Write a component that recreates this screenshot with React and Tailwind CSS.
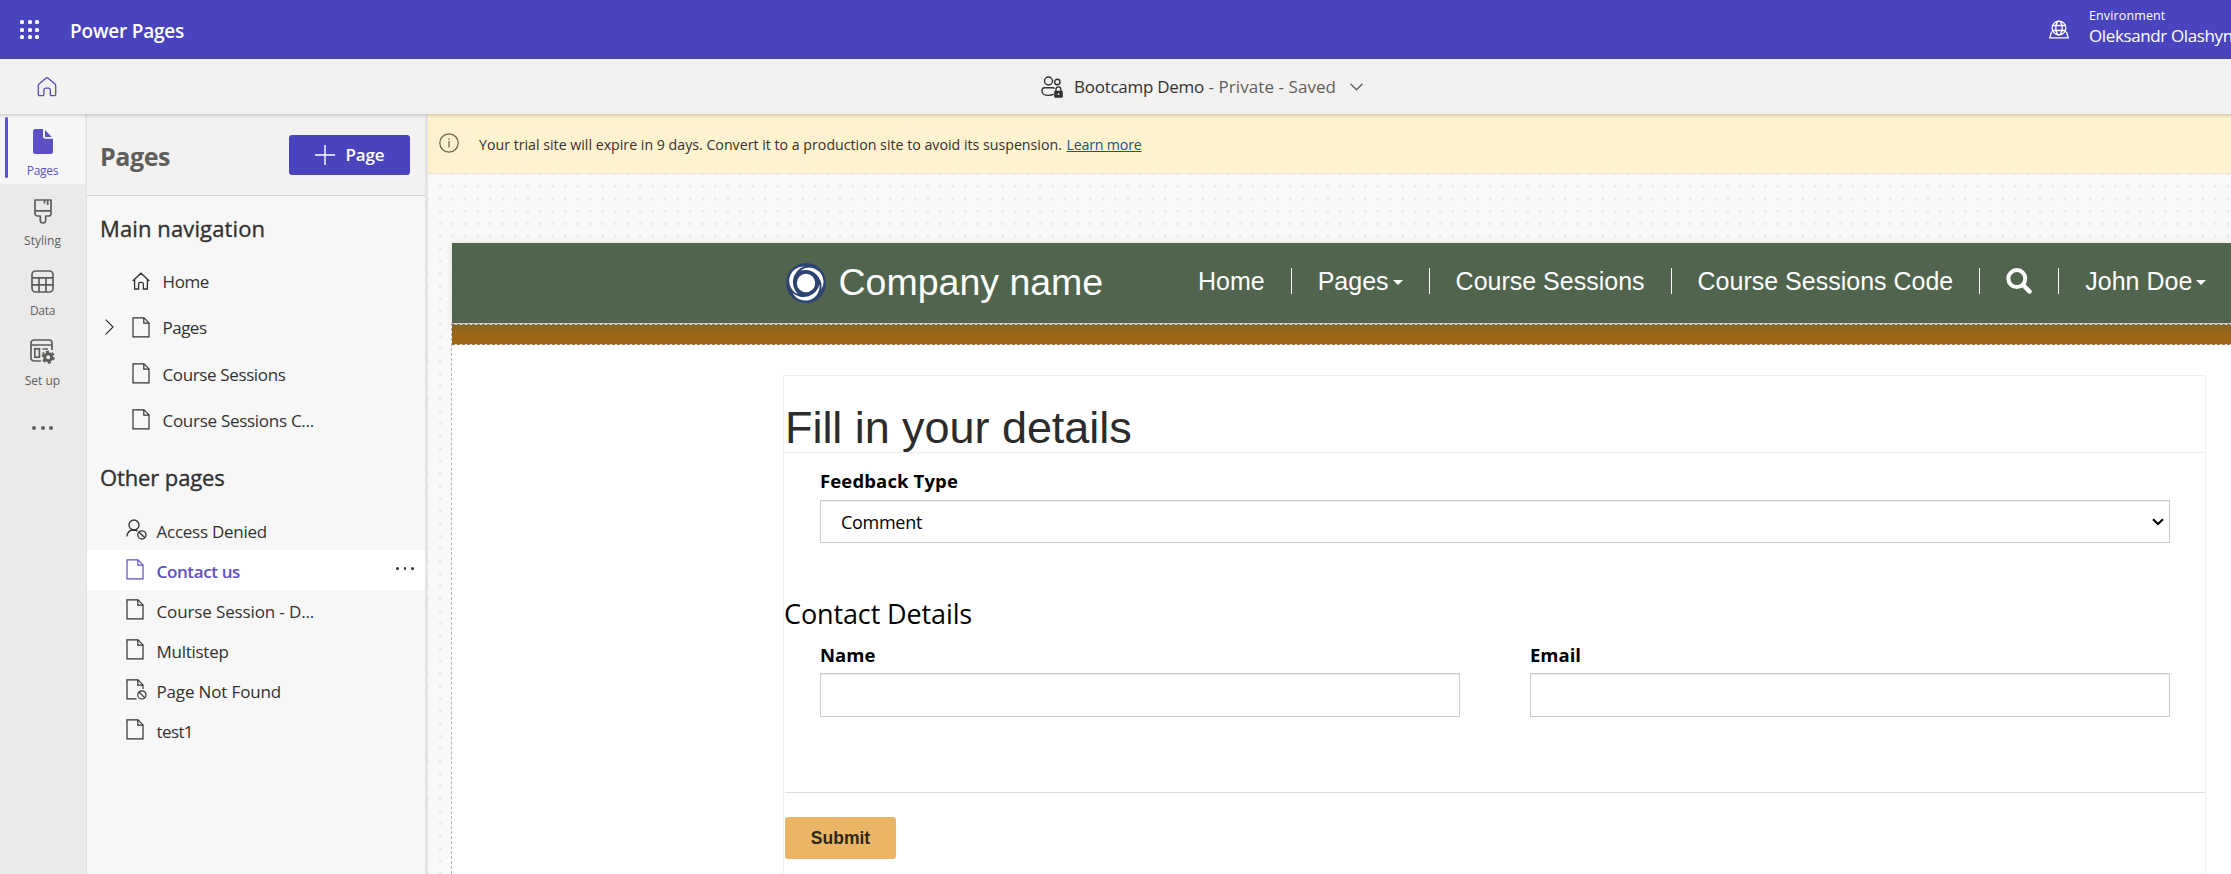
import React from "react";

const DocIcon = ({ className = "" }) => (
  <svg viewBox="0 0 18 21" className={"h-[21px] w-[18px] shrink-0 " + className} fill="none" stroke="currentColor" strokeWidth="1.2">
    <path d="M1 .9H12L17 5.900V19.9H1Z" />
    <path d="M11.800 .9V6.100H17" />
  </svg>
);

const HomeIcon = ({ className = "" }) => (
  <svg viewBox="0 0 18 18" className={"h-[18px] w-[18px] shrink-0 " + className} fill="none" stroke="currentColor" strokeWidth="1.3">
    <path d="M.7 9 9 1.2 17.3 9M2.6 7.4V17H6.6V12a1.6 1.6 0 0 1 1.6-1.6h1.6A1.6 1.6 0 0 1 11.4 12v5h4V7.4" />
  </svg>
);

const HomeRoundIcon = () => (
  <svg viewBox="0 0 20 20" className="h-5 w-5" fill="none" stroke="currentColor" strokeWidth="1.3" strokeLinejoin="round">
    <path d="M1.3 8.6a2 2 0 0 1 .7-1.5L8.9 1.2a1.6 1.6 0 0 1 2.2 0L18 7.1a2 2 0 0 1 .7 1.5v8.9a1.2 1.2 0 0 1-1.2 1.2h-3a1.2 1.2 0 0 1-1.2-1.2v-4.3a2 2 0 0 0-2-2H8.9a2 2 0 0 0-2 2v4.3a1.2 1.2 0 0 1-1.2 1.2H2.5a1.2 1.2 0 0 1-1.2-1.2Z" />
  </svg>
);

const UserBlockIcon = () => (
  <svg viewBox="0 0 21 21" className="h-[21px] w-[21px] shrink-0" fill="none" stroke="currentColor" strokeWidth="1.3">
    <circle cx="8" cy="6" r="5" />
    <path d="M.8 17.5C1.3 13.5 4.2 11 7.8 11c1.4 0 2.6.4 3.6 1.1" />
    <circle cx="15.9" cy="15.9" r="4.1" />
    <path d="m13 13 5.8 5.8" />
  </svg>
);

const DocBlockIcon = () => (
  <svg viewBox="0 0 21 21" className="h-[21px] w-[21px] shrink-0" fill="none" stroke="currentColor" strokeWidth="1.2">
    <path d="M10.5 19.9H1V.9H12L17 5.900V10M11.800 .9V6.100H17" />
    <circle cx="15.9" cy="15.9" r="4.1" />
    <path d="m13 13 5.8 5.8" />
  </svg>
);

const PagesRailIcon = () => (
  <svg viewBox="0 0 20 25" className="h-[25px] w-5" fill="currentColor">
    <path d="M2.5 0H10v7.5A2.3 2.3 0 0 0 12.300 9.700H20V22.500A2.500 2.500 0 0 1 17.500 25h-15A2.500 2.500 0 0 1 0 22.500v-20A2.500 2.500 0 0 1 2.500 0Z" />
    <path d="M12 1 18.700 8H12Z" />
  </svg>
);

const StylingIcon = () => (
  <svg viewBox="0 0 18 25" className="h-[25px] w-[18px]" fill="none" stroke="currentColor" strokeWidth="1.700" strokeLinejoin="round">
    <path d="M1 1H17V14.500A2.500 2.500 0 0 1 14.500 17H11.700V21.300A2.700 2.700 0 0 1 6.300 21.300V17H3.500A2.500 2.500 0 0 1 1 14.500ZM1 11.800H17M10.500 1V4.500M13.700 1V6" />
  </svg>
);

const DataIcon = () => (
  <svg viewBox="0 0 23 23" className="h-[23px] w-[23px]" fill="none" stroke="currentColor" strokeWidth="1.700">
    <rect x="1" y="1" width="21" height="21" rx="3.500" />
    <path d="M1 7.800H22M1 14.800H22M8 7.800V22M15 7.800V22" />
  </svg>
);

const SetupIcon = () => (
  <svg viewBox="0 0 25 25" className="h-[25px] w-[25px]" fill="none" stroke="currentColor" strokeWidth="1.700">
    <path d="M11 22H4a3 3 0 0 1-3-3V4A3 3 0 0 1 4 1H19a3 3 0 0 1 3 3v7M1 6H22M12.500 10H18M12.500 14H14.500" />
    <rect x="4.800" y="9.800" width="4.600" height="8.400" />
    <circle cx="18.200" cy="18.200" r="3.500" strokeWidth="3" />
    <circle cx="18.200" cy="18.200" r="5.500" strokeWidth="2.200" strokeDasharray="2.900 2.860" />
  </svg>
);

const PeopleLockIcon = () => (
  <svg viewBox="0 0 23 22" className="h-[22px] w-[23px]" fill="none" stroke="currentColor" strokeWidth="1.400">
    <circle cx="7.500" cy="5" r="4" />
    <circle cx="16.300" cy="6" r="2.700" />
    <path d="M12.800 18.200C11.500 19 9.700 19.400 7.500 19.400 3.500 19.400 1 17.800 1 15.200V14a2.200 2.200 0 0 1 2.200-2.200h8.600a2 2 0 0 1 1.700.9" />
    <path d="M15 15V13.300a2.400 2.400 0 0 1 4.800 0V15" />
    <rect x="13.200" y="14.800" width="8.600" height="7" rx="1" fill="currentColor" stroke="none" />
    <circle cx="17.500" cy="18.200" r=".9" fill="#f3f2f1" stroke="none" />
  </svg>
);

const EnvironmentIcon = () => (
  <svg viewBox="0 0 20 19" className="h-[19px] w-5" fill="none" stroke="currentColor" strokeWidth="1.300">
    <circle cx="10" cy="8" r="6.900" />
    <ellipse cx="10" cy="8" rx="3.200" ry="6.900" />
    <path d="M3.700 5.500H16.300M3.700 10.500H16.300M3.200 12.200H2.400L.8 17.900H19.200L17.600 12.200H16.800" />
  </svg>
);

const Logo = () => (
  <svg viewBox="-20 -20 40 40" className="h-10 w-10 shrink-0">
    <circle r="20" fill="#2d4472" />
    <circle r="9.200" fill="#fff" />
    <g fill="#fff">
      <path d="M-2-16.500A14.300 14.300 0 0 0-8 11 16.500 16.500 0 0 1-2-16.500Z" />
      <path transform="rotate(120)" d="M-2-16.500A14.300 14.300 0 0 0-8 11 16.500 16.500 0 0 1-2-16.500Z" />
      <path transform="rotate(240)" d="M-2-16.500A14.300 14.300 0 0 0-8 11 16.500 16.500 0 0 1-2-16.500Z" />
    </g>
  </svg>
);

const Caret = () => (
  <svg viewBox="0 0 10 5" className="mt-[3px] ml-[4px] h-[5px] w-[10px]" fill="#fff">
    <path d="M0 0H10L5 5Z" />
  </svg>
);

const Dots = ({ className }) => (
  <div className={"flex " + className}>
    <i className="rounded-full bg-current" />
    <i className="rounded-full bg-current" />
    <i className="rounded-full bg-current" />
  </div>
);

function RailItem({ icon, label, tracking, active }) {
  return (
    <div className={"flex h-[70px] w-[85px] " + (active ? "bg-[#f6f6f6] text-[#5c50c4]" : "text-[#5f5d5b]")}>
      <div className={"mt-[3px] ml-[5px] h-[61px] w-[3px] rounded-sm " + (active ? "bg-[#5c50c4]" : "")} />
      <div className="flex w-[69px] flex-col items-center">
        <div className="flex h-[54px] items-center">{icon}</div>
        <div className={"-mt-[5px] h-4 text-[12px] leading-4 whitespace-nowrap " + tracking}>{label}</div>
      </div>
    </div>
  );
}

const Main = ({ icon, children, tracking, expandable }) => (
  <div className="flex h-[46.400px] items-center pl-[17.500px]">
    <div className="w-[27.500px]">
      {expandable && (
        <svg viewBox="0 0 9 16" className="-mt-[2px] h-4 w-[9px]" fill="none" stroke="#323130" strokeWidth="1.200">
          <path d="M.7.700 8 8 .7 15.300" />
        </svg>
      )}
    </div>
    <div className="-mt-[2px] w-[30.500px]">{icon}</div>
    <span className={"whitespace-nowrap " + tracking}>{children}</span>
  </div>
);

const Other = ({ icon, children, tracking, active }) => (
  <div className={"flex h-10 items-center pl-[39px] " + (active ? "bg-white font-semibold text-[#5c50be]" : "")}>
    <div className="-mt-px w-[30.500px]">{icon}</div>
    <span className={"mt-[3px] whitespace-nowrap " + tracking}>{children}</span>
    {active && <Dots className="mr-[11.500px] mb-[3px] ml-auto gap-[5px] text-[#323130] [&>i]:size-[2.500px]" />}
  </div>
);

const NavItem = ({ children, last }) => (
  <>
    <div className="flex items-center px-[26px]">{children}</div>
    {!last && <div className="h-[26px] w-px bg-white" />}
  </>
);

const Field = ({ label, tracking }) => (
  <div className="flex-1">
    <div className={"h-[31px] text-[18.500px] leading-[26px] font-bold " + tracking}>{label}</div>
    <div className="h-[44px] border border-[#ccc] bg-white shadow-[inset_0_1px_1px_rgba(0,0,0,0.075)]" />
  </div>
);

export default function App() {
  return (
    <div className="flex h-[874px] w-[2231px] flex-col overflow-hidden bg-white font-['Open_Sans',sans-serif] text-[#323130]">
      <header className="flex h-[59px] shrink-0 bg-[#4a43be] text-white">
        <div className="mt-[20px] ml-[20px] grid h-[19px] w-[50px] grid-cols-[4px_4px_4px] content-start gap-[3.500px]">
          {Array.from({ length: 9 }, (_, i) => (
            <i key={i} className="size-[4px] rounded-[1.500px] bg-white" />
          ))}
        </div>
        <div className="text-[19px] leading-[62px] font-semibold tracking-[-0.200px]">Power Pages</div>
        <div className="mt-[20px] ml-auto"><EnvironmentIcon /></div>
        <div className="ml-[20px] w-[142px] overflow-hidden whitespace-nowrap">
          <div className="mt-[7px] h-[18px] text-[12.500px] leading-[18px] tracking-[0.130px]">Environment</div>
          <div className="h-6 text-[17px] leading-[22px] tracking-[-0.380px]">Oleksandr Olashyn</div>
        </div>
      </header>

      <div className="flex h-[55px] shrink-0 items-center bg-[#f3f2f1]">
        <div className="ml-[37px] text-[#5549bd]"><HomeRoundIcon /></div>
        <div className="ml-[984px] flex items-center">
          <PeopleLockIcon />
          <div className="mt-px ml-[10px] text-[17px] leading-[22px] whitespace-pre">
            <span className="tracking-[-0.270px]">Bootcamp Demo</span>
            <span className="tracking-[0.070px] text-[#605e5c]"> - Private - Saved</span>
          </div>
          <svg viewBox="0 0 13 8" className="ml-[14px] h-2 w-[13px]" fill="none" stroke="#605e5c" strokeWidth="1.300">
            <path d="M.5.800 6.500 6.800 12.500.800" />
          </svg>
        </div>
      </div>

      <div className="relative flex min-h-0 flex-1">
        <div className="absolute inset-x-0 top-0 z-10 h-[4px] bg-linear-to-b from-black/15 to-transparent" />

        <nav className="w-[86px] shrink-0 bg-[#ebeae9]">
          <RailItem active icon={<PagesRailIcon />} label="Pages" tracking="tracking-[-0.270px]" />
          <RailItem icon={<StylingIcon />} label="Styling" tracking="" />
          <RailItem icon={<DataIcon />} label="Data" tracking="tracking-[-0.330px]" />
          <RailItem icon={<SetupIcon />} label="Set up" tracking="" />
          <Dots className="mt-[32px] ml-[32px] gap-[4.500px] text-[#605e5c] [&>i]:size-[4px]" />
        </nav>

        <aside className="w-[339px] shrink-0 border-l border-[#e2e1e0] bg-[#f7f7f7] text-[17px]">
          <div className="flex h-[82px] items-center border-b border-[#d6d5d4] bg-[#f3f2f1] px-[13px]">
            <h1 className="mt-[3px] text-[25px] leading-8 font-bold tracking-[-0.420px] text-[#5f5e5c]">Pages</h1>
            <button className="mr-[2px] ml-auto flex h-10 w-[121px] items-center rounded-[3px] bg-[#4a43be] pl-[26px] font-semibold tracking-[-0.200px] text-white">
              <svg viewBox="0 0 20 20" className="mr-[10.500px] h-5 w-5" stroke="#fff" strokeWidth="1.400"><path d="M10 0V20M0 10H20" /></svg>
              <span className="mt-px">Page</span>
            </button>
          </div>
          <h2 className="mt-[16px] h-8 pl-[13px] text-[22px] leading-8 font-medium tracking-[0.120px] [-webkit-text-stroke:0.350px_#323130]">Main navigation</h2>
          <div className="mt-[14.500px]">
            <Main icon={<HomeIcon />} tracking="tracking-[-0.390px]">Home</Main>
            <Main icon={<DocIcon />} tracking="tracking-[-0.510px]" expandable>Pages</Main>
            <Main icon={<DocIcon />} tracking="tracking-[-0.370px]">Course Sessions</Main>
            <Main icon={<DocIcon />} tracking="tracking-[-0.280px]">Course Sessions C...</Main>
          </div>
          <h2 className="mt-[16.900px] h-8 pl-[13px] text-[22px] leading-8 font-medium tracking-[-0.120px] [-webkit-text-stroke:0.350px_#323130]">Other pages</h2>
          <div className="mt-[17px]">
            <Other icon={<UserBlockIcon />} tracking="tracking-[-0.250px]">Access Denied</Other>
            <Other active icon={<DocIcon />} tracking="tracking-[-0.370px]">Contact us</Other>
            <Other icon={<DocIcon />} tracking="tracking-[-0.130px]">Course Session - D...</Other>
            <Other icon={<DocIcon />} tracking="tracking-[-0.270px]">Multistep</Other>
            <Other icon={<DocBlockIcon />} tracking="tracking-[-0.150px]">Page Not Found</Other>
            <Other icon={<DocIcon />} tracking="tracking-[-0.600px]">test1</Other>
          </div>
        </aside>
        <div className="w-[3px] shrink-0 bg-[#e5e3e3]" />

        <main className="flex min-w-0 flex-1 flex-col">
          <div className="flex h-[60px] shrink-0 items-center border-b border-[#ece6e3] bg-[#fff2cf] pl-[10.500px] text-[14.200px]">
            <svg viewBox="0 0 20 20" className="-mt-px h-5 w-5" fill="none" stroke="#6b6243" strokeWidth="1.200">
              <circle cx="10" cy="10" r="9.200" />
              <path d="M10 8V14.500M10 5.300V6.800" />
            </svg>
            <p className="mt-[3px] ml-[20.500px] whitespace-nowrap">
              Your trial site will expire in 9 days. Convert it to a production site to avoid its suspension.{" "}
              <a className="ml-px tracking-[-0.190px] text-[#0f548c] underline">Learn more</a>
            </p>
          </div>

          <div className="flex flex-1 flex-col bg-[#faf9f8] bg-[radial-gradient(circle,#edebea_1.300px,transparent_1.900px)] bg-[length:12.500px_12.500px] bg-[position:6px_6px] pt-[69px] pl-[23px]">
            <div className="ml-px flex h-20 shrink-0 items-center bg-[#50644e] pl-[334px] font-['Liberation_Sans',sans-serif] whitespace-nowrap text-white shadow-[0_0_6px_rgba(0,0,0,0.12)]">
              <Logo />
              <div className="-mt-[3px] ml-[12.500px] w-[333.500px] shrink-0 text-[37.500px] leading-[44px]">Company name</div>
              <div className="-mt-[4px] flex shrink-0 items-center text-[25px] leading-[30px]">
                <NavItem>Home</NavItem>
                <NavItem>Pages<Caret /></NavItem>
                <NavItem>Course Sessions</NavItem>
                <NavItem>Course Sessions Code</NavItem>
                <NavItem>
                  <svg viewBox="0 0 26 26" className="h-[26px] w-[26px]" fill="none" stroke="#fff">
                    <circle cx="10.800" cy="10.600" r="8.500" strokeWidth="4" />
                    <path d="m17 17 6.500 6.500" strokeWidth="4.500" strokeLinecap="round" />
                  </svg>
                </NavItem>
                <NavItem last>John Doe<Caret /></NavItem>
              </div>
            </div>

            <div className="flex flex-1 flex-col border-l border-dashed border-[#b5b4b2] bg-white">
              <div className="h-px shrink-0 bg-[#d3cfc0]" />
              <div className="h-px shrink-0 bg-[repeating-linear-gradient(90deg,#7d7a68_0_3px,#ddd8cb_3px_5px)]" />
              <div className="h-[19px] shrink-0 bg-linear-to-b from-[#8a651c] to-[#9f6717] to-60%" />
              <div className="h-px shrink-0 bg-[repeating-linear-gradient(90deg,#9b7a4c_0_3px,#e8dfd0_3px_5px)]" />

              <form className="mt-[30px] ml-[331px] w-[1423px] flex-1 border border-b-0 border-[#eeeeee] text-black">
                <h2 className="mx-px h-[77px] border-b border-[#ebebeb] pt-[27px] font-['Liberation_Sans',sans-serif] text-[45px] leading-[50px] tracking-[-0.050px] text-[#2b2b2b]">Fill in your details</h2>
                <div className="mr-[35px] ml-[36px] mt-[15px]">
                  <div className="h-[32px] text-[18.500px] leading-[26px] font-bold tracking-[0.130px]">Feedback Type</div>
                  <div className="flex h-[43px] items-center justify-between border border-[#ccc] pr-[5px] pl-[20px] text-[18px] tracking-[-0.290px] shadow-[inset_0_1px_1px_rgba(0,0,0,0.075)]">
                    <span className="mt-[2px]">Comment</span>
                    <svg viewBox="0 0 12 8" className="h-2 w-3" fill="none" stroke="#000" strokeWidth="2.200"><path d="m1 1.200 5 4.800 5-4.800" /></svg>
                  </div>
                </div>
                <h3 className="mt-[53px] h-9 text-[27px] leading-9 tracking-[-0.120px]">Contact Details</h3>
                <div className="mr-[35px] ml-[36px] mt-[10px] flex gap-[70px]">
                  <Field label="Name" tracking="" />
                  <Field label="Email" tracking="" />
                </div>
                <div className="mt-[75px] ml-px h-px bg-[#dedede]" />
                <button type="button" className="mt-[24px] ml-px block h-[42px] w-[111px] rounded-[3px] bg-[#eab566] font-['Liberation_Sans',sans-serif] text-[17.500px] font-bold text-[#2f2817]">Submit</button>
              </form>
            </div>
          </div>
        </main>
      </div>
    </div>
  );
}
